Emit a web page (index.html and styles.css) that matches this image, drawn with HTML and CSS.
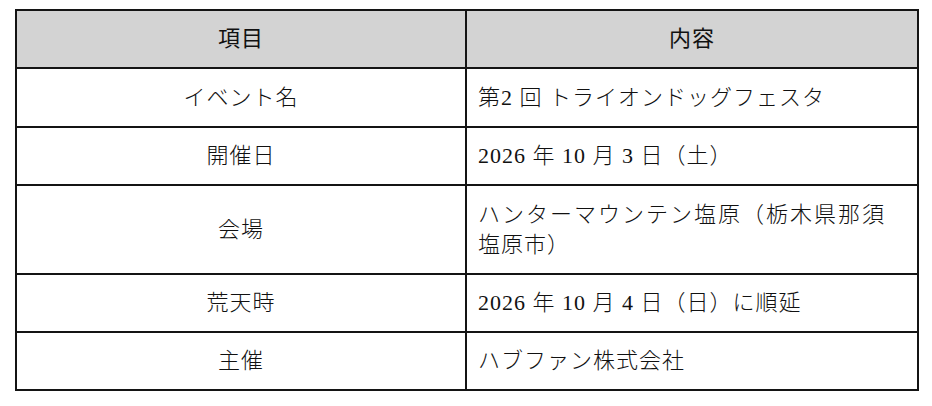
FILE: index.html
```html
<!DOCTYPE html>
<html lang="ja">
<head>
<meta charset="utf-8">
<title>イベント概要</title>
<link rel="stylesheet" href="styles.css">
</head>
<body>
<table class="info">
  <colgroup>
    <col class="col-key">
    <col class="col-val">
  </colgroup>
  <thead>
    <tr class="head">
      <th>項目</th>
      <th>内容</th>
    </tr>
  </thead>
  <tbody>
    <tr class="r1">
      <td class="key">イベント名</td>
      <td class="val">第2 回 トライオンドッグフェスタ</td>
    </tr>
    <tr>
      <td class="key">開催日</td>
      <td class="val">2026 年 10 月 3 日（土）</td>
    </tr>
    <tr class="tall">
      <td class="key">会場</td>
      <td class="val">ハンターマウンテン塩原（栃木県那須塩原市）</td>
    </tr>
    <tr>
      <td class="key">荒天時</td>
      <td class="val">2026 年 10 月 4 日（日）に順延</td>
    </tr>
    <tr>
      <td class="key">主催</td>
      <td class="val">ハブファン株式会社</td>
    </tr>
  </tbody>
</table>
</body>
</html>
```

FILE: styles.css
```css
html, body {
  margin: 0;
  padding: 0;
  background: #ffffff;
}

body {
  font-family: "Liberation Serif", "Noto Sans CJK JP", serif;
  font-size: 22px;
  font-weight: 300;
  color: #111111;
}

.info {
  border-collapse: collapse;
  table-layout: fixed;
  width: 902px;
  margin: 9px 0 0 15px;
}

.col-key { width: 450px; }
.col-val { width: 452px; }

.info th,
.info td {
  border: 2px solid #141414;
  height: 56px;
  padding: 0;
  line-height: 30px;
  letter-spacing: 1px;
  vertical-align: middle;
}

.info th {
  background: #d3d3d3;
  font-weight: 400;
  text-align: center;
}

.info tr.r1 td {
  height: 57px;
}

.info tr.tall td {
  height: 87px;
}

.key {
  text-align: center;
}

.val {
  text-align: justify;
  padding-left: 11px !important;
  padding-right: 32px !important;
}
```
